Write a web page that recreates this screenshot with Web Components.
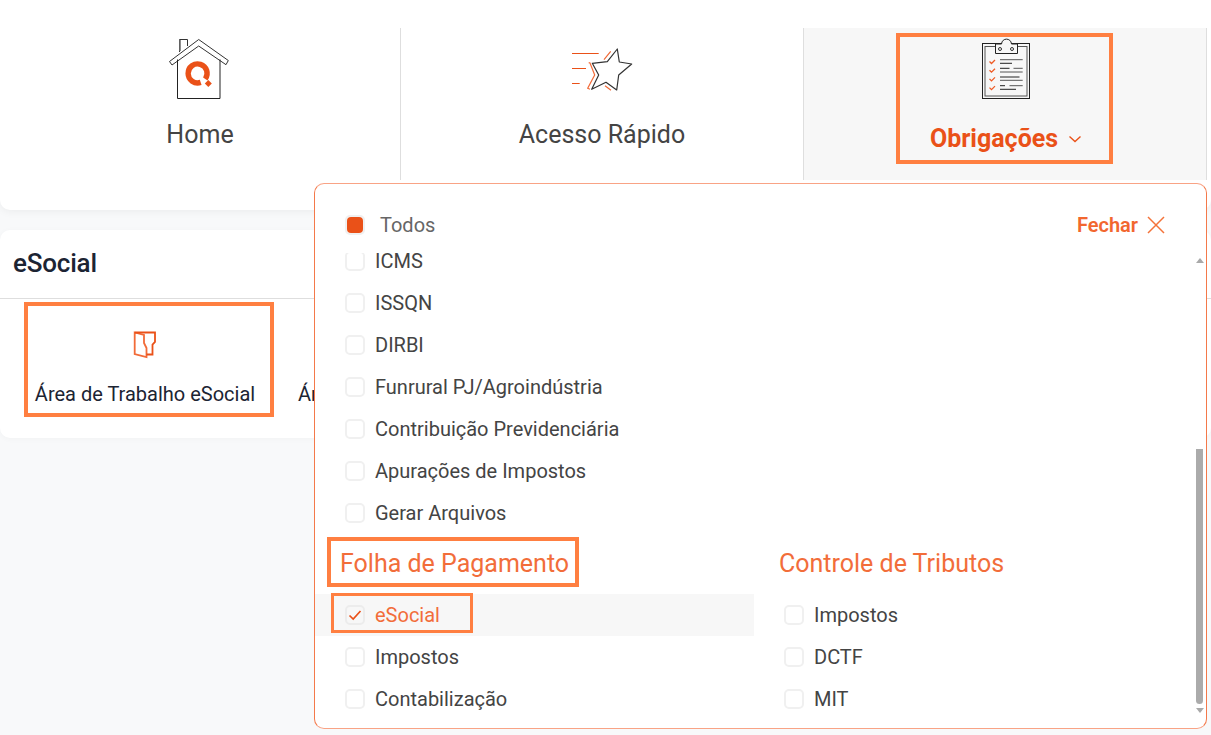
<!DOCTYPE html>
<html lang="pt-BR"><head><meta charset="utf-8"><title>Obrigações</title>
<style>
html,body{margin:0;padding:0}
body{background:#f8f9fa;font-family:Roboto,"Liberation Sans",sans-serif;color:#444;width:1211px;height:735px;overflow:hidden;position:relative}
svg{display:block}
</style></head><body>
<app-shell>
  <nav-card>
    <nav-item>
      <svg slot="icon" width="64" height="64" viewBox="168 37 64 64" fill="none">
        <path d="M179.500 52V39.500H187.500V46" stroke="#333" stroke-width="1"/><path d="M180.200 40V51" stroke="#888" stroke-width="1.500"/>
        <path d="M198.700 39.500L228.300 60.500L226 64.700L198.700 46L172 65L169.500 61.500Z" fill="#fff" stroke="#333" stroke-width="1" stroke-linejoin="round"/>
        <path d="M177.500 59.500V98.500H220V59.500" stroke="#222" stroke-width="1"/>
        <path d="M205.300 79A9.500 9.500 0 1 0 200.700 82.400" stroke="#ea5118" stroke-width="5.400"/>
        <path d="M208.300 80L211.800 83.500L208.300 87L204.800 83.500Z" fill="#ea5118"/>
      </svg>
      Home
    </nav-item>
    <nav-item>
      <svg slot="icon" width="64" height="64" viewBox="570 37 64 64" fill="none">
        <path d="M572 53.500H598.700M572 68.500H586M572 83.500H579.700" stroke="#ea5118" stroke-width="1"/>
        <path d="M610.700 51.300L604 59.700M588.700 62.700L590 63L594.700 75L587.700 88.300L590 89.300M605 85.700L611 90.300" stroke="#f26b38" stroke-width="1.200"/>
        <path d="M617.300 49L619.300 62L631.700 64L618.700 75L616.700 90L606 82.300L591.700 89.300L598.700 75L592.300 63.300L607.300 61.700Z" stroke="#333" stroke-width="1.200" stroke-linejoin="round"/>
      </svg>
      Acesso Rápido
    </nav-item>
    <nav-item active>
      <svg slot="icon" width="65" height="64" viewBox="972 37 65 64" fill="none">
        <rect x="982.500" y="43.500" width="47" height="55" stroke="#222"/>
        <rect x="985" y="46.500" width="42" height="49.500" stroke="#555"/>
        <path d="M995.500 44H1001.500C1002 37.500 1011 37.500 1011.500 44H1017.500V53.500H995.500Z" fill="#f7f7f7" stroke="#222"/>
        <circle cx="1000" cy="49" r="1.500" stroke="#333"/><circle cx="1012" cy="49" r="1.500" stroke="#333"/>
        <path d="M989.500 61.500L991.500 63.500L995 60M989.500 70.200L991.500 72.200L995 68.700M989.500 78.900L991.500 80.900L995 77.400M989.500 87.600L991.500 89.600L995 86.100" stroke="#ee5a24" stroke-width="1.300"/>
        <path d="M1000 59.700H1022.700M1000 72H1022.700M1000 80.300H1022.700M1013.500 68.300H1022.700M1009.500 85.700H1022.700" stroke="#555"/>
        <path d="M1000 63.300H1012M1000 68.300H1009.500M1000 77H1019.500M1000 85.700H1005M1000 89.300H1016" stroke="#222"/>
      </svg>
      Obrigações
    </nav-item>
  </nav-card>
  <es-card heading="eSocial">
    <es-tile boxed>
      <svg slot="icon" width="24" height="30" viewBox="133 331 24 30" fill="none" stroke="#ea5118" stroke-width="1.800">
        <path d="M134.700 332.500L144 335L144 343L146.500 348V357L134.700 354Z" stroke="#f26b38"/>
        <path d="M134.700 332.500H155V342L152.500 344.500V354.500H146.500"/>
      </svg>
      Área de Trabalho eSocial
    </es-tile>
    <es-tile>Área</es-tile>
  </es-card>
  <drop-panel>
    <check-row slot="all" filled>Todos</check-row>
    <check-row>ICMS</check-row>
    <check-row>ISSQN</check-row>
    <check-row>DIRBI</check-row>
    <check-row>Funrural PJ/Agroindústria</check-row>
    <check-row>Contribuição Previdenciária</check-row>
    <check-row>Apurações de Impostos</check-row>
    <check-row>Gerar Arquivos</check-row>
    <sec-col slot="col1" heading="Folha de Pagamento" boxed>
      <check-row checked boxed highlight>eSocial</check-row>
      <check-row>Impostos</check-row>
      <check-row>Contabilização</check-row>
    </sec-col>
    <sec-col slot="col2" heading="Controle de Tributos">
      <check-row>Impostos</check-row>
      <check-row>DCTF</check-row>
      <check-row>MIT</check-row>
    </sec-col>
  </drop-panel>
</app-shell>
<script>
function def(name, html, observedSetup){
  customElements.define(name, class extends HTMLElement{
    constructor(){super();const r=this.attachShadow({mode:'open'});const t=document.createElement('template');t.innerHTML=html;r.appendChild(t.content.cloneNode(true));}
    connectedCallback(){ if(observedSetup) observedSetup(this,this.shadowRoot); }
  });
}
def('app-shell',`<style>:host{display:block;position:relative;width:1211px;height:735px}</style><slot></slot>`);
def('nav-card',`<style>:host{display:grid;grid-template-columns:401px 403px 403px;padding-top:28px;box-sizing:border-box;height:210px;background:#fff;border-radius:0 0 10px 10px;box-shadow:0 2px 8px rgba(0,0,0,.05);align-items:start}</style><slot></slot>`);
def('nav-item',`<style>
:host{display:flex;flex-direction:column;align-items:center;height:152px;box-sizing:border-box;padding-top:9px;border-right:1px solid #dedede;font-size:25px;line-height:28px;color:#444}
:host([active]){background:#f7f7f7;color:#ea5118;font-weight:700}
.in{display:flex;flex-direction:column;align-items:center}
.lb{margin-top:20px;display:flex;align-items:center;gap:10px}
:host([active]) .in{width:209px;height:123px;margin-right:1px;outline:4px solid #ff7f41}
:host([active]) .lb{margin-top:24px;padding-left:3px}
svg{display:none}
:host([active]) svg{display:block}
</style><div class="in"><slot name="icon"></slot><div class="lb"><span><slot></slot></span>
<svg width="14" height="8" viewBox="0 0 14 8" fill="none"><path d="M1.500 1.500L7 6.500L12.500 1.500" stroke="#ea5118" stroke-width="1.400"/></svg></div></div>`);
def('es-card',`<style>
:host{display:block;margin:20px 0 0;height:208px;background:#fff;border-radius:10px;box-shadow:0 1px 6px rgba(0,0,0,.03)}
.hd{height:68px;box-sizing:border-box;padding:18px 13px 0;font-size:26px;line-height:30px;font-weight:500;color:#1c2433;letter-spacing:-.2px}
.ln{height:1px;background:#dedede}
.bd{display:flex;gap:21px;padding:7px 0 0 28px}
</style><div class="hd"></div><div class="ln"></div><div class="bd"><slot></slot></div>`,(el,r)=>{r.querySelector('.hd').textContent=el.getAttribute('heading')});
def('es-tile',`<style>
:host{display:flex;flex-direction:column;align-items:center;box-sizing:border-box;padding:25px 7px 7px;height:107px;font-size:20px;line-height:24px;color:#1c2433;white-space:nowrap;justify-content:flex-end}
:host([boxed]){outline:4px solid #ff7f41;width:242px;padding-right:15px}
.ic{flex:1}
</style><div class="ic"><slot name="icon"></slot></div><div><slot></slot></div>`);
def('drop-panel',`<style>
:host{display:flex;flex-direction:column;position:absolute;left:314px;top:183px;width:893px;height:546px;box-sizing:border-box;background:#fff;border:1px solid #f4794a;border-top-color:#f9a385;border-bottom-color:#f9a385;border-radius:10px;overflow:hidden}
.hd{display:flex;justify-content:space-between;align-items:center;height:42px;margin:20px 41px 7px 0;flex:none}
.fc{display:flex;align-items:center;gap:9px;font-size:20px;font-weight:600;color:#f2672f;line-height:22px}
.body{flex:1;display:flex;min-height:0}
.list{flex:1;overflow:hidden}
.inner{margin-top:-13px}
.cols{display:flex}
::slotted([slot=col1]){width:439px}
::slotted([slot=col2]){flex:1}
</style>
<div class="hd"><slot name="all"></slot><div class="fc">Fechar<svg width="18" height="18" viewBox="0 0 18 18" fill="none"><path d="M1 1L17 17M17 1L1 17" stroke="#f4733a" stroke-width="1.500"/></svg></div></div>
<div class="body"><div class="list"><div class="inner"><slot></slot><div class="cols"><slot name="col1"></slot><slot name="col2"></slot></div></div></div>
<mini-scroll></mini-scroll></div>`);
def('mini-scroll',`<style>
:host{display:flex;flex-direction:column;align-items:center;width:9px;flex:none;margin-right:2px;box-sizing:border-box;padding-top:5px}
.up,.dn{width:0;height:0;border-left:4.500px solid transparent;border-right:4.500px solid transparent;flex:none}
.up{border-bottom:5px solid #a9a9a9}
.th{width:7px;height:255px;margin-top:186px;background:#ababab;border-radius:0 0 4px 4px;flex:none}
.dn{border-top:5px solid #a9a9a9;margin-top:4px}
</style><div class="up"></div><div class="th"></div><div class="dn"></div>`);
def('check-row',`<style>
:host{display:block;height:42px;font-size:20px;color:#444;box-sizing:border-box;white-space:nowrap}
:host([highlight]){background:#f7f7f7;color:#f26d3a}
:host([slot=all]){color:#666}
.w{display:inline-flex;align-items:center;gap:10px;height:42px;padding-left:30px;box-sizing:border-box}
:host([slot=all]) .w{gap:15px}
:host([boxed]) .w{height:34px;margin:2px 0 0 19px;padding:4px 30px 0 11px;outline:3px solid #ff7f41}
.c{width:20px;height:20px;box-sizing:border-box;border:2px solid #f0f0f0;border-radius:5px;background:#fff;display:flex;align-items:center;justify-content:center;flex:none}
:host([highlight]) .c{background:#f7f7f7;border-color:#ececec}
:host([filled]) .c i{display:block;width:16px;height:16px;border-radius:4px;background:#ea5118}
svg{display:none}
:host([checked]) svg{display:block}
</style><div class="w"><span class="c"><i></i><svg width="14" height="12" viewBox="0 0 14 12" fill="none"><path d="M1.500 6.500L5.200 10L12.500 2" stroke="#ea5118" stroke-width="1.700"/></svg></span><span><slot></slot></span></div>`);
def('sec-col',`<style>
:host{display:block}
.t{display:flex;height:60px;box-sizing:border-box;padding:7px 0 0 16px}
.b{height:42px;box-sizing:border-box;padding:0 5px 0 9px;font-size:25px;line-height:46px;color:#f26d3a;white-space:nowrap}
:host([boxed]) .t{padding-left:16px}
:host([boxed]) .b{outline:4px solid #ff7f41;padding-right:6px}
</style><div class="t"><div class="b"></div></div><slot></slot>`,(el,r)=>{r.querySelector('.b').textContent=el.getAttribute('heading')});
</script>
</body></html>
